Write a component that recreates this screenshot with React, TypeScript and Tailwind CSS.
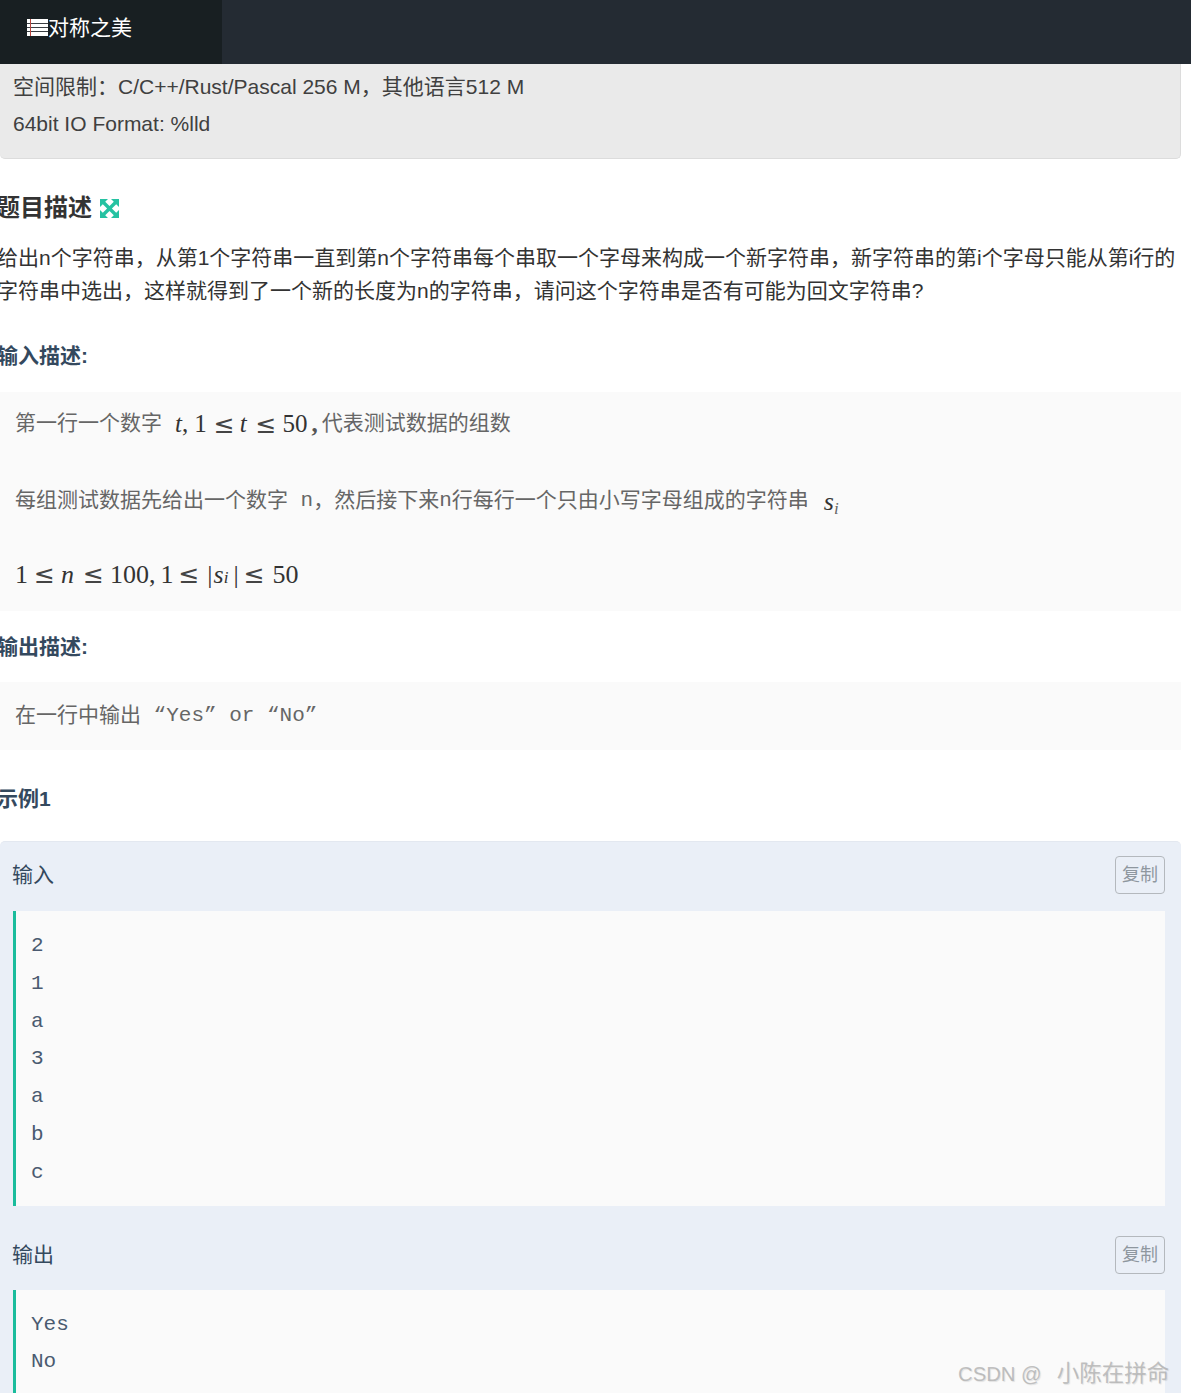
const sans = "font-['Arial','Liberation_Sans','Noto_Sans_CJK_SC',sans-serif]";
const pre = "font-['Liberation_Serif','Noto_Sans_CJK_SC',serif]";

function CopyBtn() {
  return (
    <button className="h-[38px] w-[50px] rounded-[4px] border border-[#b4b8bd] text-[18px] leading-[34px] text-[#8f979f]">
      复制
    </button>
  );
}

function Code({ lines, end }: { lines: string[]; end?: boolean }) {
  return (
    <div className={"ml-[13px] mr-[16px] border-l-[3px] border-[#1abc9c] bg-[#fafafa] pl-[15px] pt-[16px] font-['Liberation_Mono',monospace] text-[21px] leading-[37.8px] text-[#4a5a70] " + (end ? "pb-[40px]" : "pb-[14px]")}>
      {lines.map((l, i) => (
        <div key={i}>{l}</div>
      ))}
    </div>
  );
}

function Section({ children, className }: { children: React.ReactNode; className: string }) {
  return <div className={"-ml-[3px] text-[21px] font-bold leading-[30px] text-[#34495e] " + className}>{children}</div>;
}

function T({ children, className = "" }: { children: React.ReactNode; className?: string }) {
  return <span className={"font-['Liberation_Serif',serif] text-[#333] " + className}>{children}</span>;
}

function Le({ className = "" }: { className?: string }) {
  return <span className={"font-['DejaVu_Sans',sans-serif] text-[25px] leading-none text-[#444] " + className}>≤</span>;
}

export default function App() {
  return (
    <div className={"relative h-[1393px] w-[1191px] overflow-hidden bg-white " + sans}>
      <header className="flex h-[64px] bg-[#242b33]">
        <div className="flex w-[222px] items-center bg-[#181f22] pb-[10px] pl-[27px] text-[21px] text-white">
          <svg width="21" height="17" viewBox="0 0 21 17" className="shrink-0">
            <rect width="21" height="17" fill="#fff" />
            <rect y="4" width="21" height="1" fill="#3a3f44" />
            <rect y="8" width="21" height="1" fill="#3a3f44" />
            <rect y="12" width="21" height="1" fill="#3a3f44" />
            <rect x="3" width="1" height="17" fill="#b8453f" />
          </svg>
          <span className="leading-none">对称之美</span>
        </div>
      </header>

      <div className="mr-[10px] h-[95px] rounded-b-[5px] border-b border-r border-[#dcdcdc] bg-[#eaeaea] pl-[13px] text-[21px] leading-[37px] text-[#404040]">
        <div className="pt-[4px]">空间限制：C/C++/Rust/Pascal 256 M，其他语言512 M</div>
        <div>64bit IO Format: %lld</div>
      </div>

      <h2 className="-ml-[4px] mt-[33px] flex h-[32px] items-center gap-[8px] text-[24px] font-bold text-[#333]">
        题目描述
        <svg width="19" height="19" viewBox="0 0 19 19" fill="#26c2a2">
          <path d="M0 0h8L5.200 2.800 9.500 7.100 13.800 2.800 11 0h8v8l-2.800-2.800L11.900 9.500l4.300 4.300L19 11v8h-8l2.800-2.800-4.300-4.300-4.300 4.300L8 19H0v-8l2.800 2.800 4.300-4.300-4.300-4.300L0 8z" />
        </svg>
      </h2>

      <p className="-ml-[3px] mt-[16px] pt-[1px] text-[21px] leading-[33px] text-[#333]">
        <span className="block whitespace-nowrap">给出n个字符串，从第1个字符串一直到第n个字符串每个串取一个字母来构成一个新字符串，新字符串的第i个字母只能从第i行的</span>
        <span className="block whitespace-nowrap">字符串中选出，这样就得到了一个新的长度为n的字符串，请问这个字符串是否有可能为回文字符串?</span>
      </p>

      <Section className="mt-[34px]">输入描述:</Section>

      <div className={"mr-[10px] mt-[21px] h-[219px] bg-[#fafafa] pl-[15px] text-[21px] text-[#666] " + pre}>
        <div className="flex h-[62px] items-center whitespace-pre pt-[2px]">
          第一行一个数字
          <span className="ml-[13px] flex items-center text-[25px]">
            <T className="italic">t</T>
            <T>,</T>
            <T className="ml-[6px]">1</T>
            <Le className="ml-[7px]" />
            <T className="ml-[5px] italic">t</T>
            <Le className="ml-[9px]" />
            <T className="ml-[6px]">50</T>
            <span className="ml-[4px] font-bold text-[#555]">,</span>
          </span>
          <span className="ml-[4px]">代表测试数据的组数</span>
        </div>
        <div className="flex h-[76px] items-center whitespace-pre pt-[18px]">
          每组测试数据先给出一个数字<span className="font-['Liberation_Mono',monospace]"> n</span>，然后接下来<span className="font-['Liberation_Mono',monospace]">n</span>行每行一个只由小写字母组成的字符串
          <span className="ml-[15px] text-[26px]">
            <T className="italic">s</T>
            <sub className="text-[17px] italic">i</sub>
          </span>
        </div>
        <div className="flex h-[74px] items-center whitespace-pre pt-[14px] text-[26px]">
          <T>1</T>
          <Le className="ml-[6px]" />
          <T className="ml-[6px] italic">n</T>
          <Le className="ml-[9px]" />
          <T className="ml-[6px]">100,</T>
          <T className="ml-[5px]">1</T>
          <Le className="ml-[5px]" />
          <T className="ml-[8px]">|</T>
          <T className="ml-[1px] italic">s</T>
          <sub className="text-[17px] italic text-[#333]">i</sub>
          <T className="ml-[5px]">|</T>
          <Le className="ml-[5px]" />
          <T className="ml-[8px]">50</T>
        </div>
      </div>

      <Section className="mt-[21px]">输出描述:</Section>

      <div className={"mr-[10px] mt-[20px] flex h-[68px] items-center whitespace-pre bg-[#fafafa] pl-[15px] text-[21px] text-[#666] " + pre}>
        在一行中输出<span className="font-['Liberation_Mono',monospace]"> “Yes” or “No”</span>
      </div>

      <Section className="mt-[34px]">示例1</Section>

      <div className="mr-[10px] mt-[27px] rounded-t-[5px] border-t border-[#e3e8f0] bg-[#eaeff7] text-[#34495e]">
        <div className="flex h-[69px] items-center justify-between pb-[4px] pl-[12px] pr-[16px] text-[21px]">
          <span>输入</span>
          <CopyBtn />
        </div>
        <Code lines={["2", "1", "a", "3", "a", "b", "c"]} />
        <div className="flex h-[84px] items-center justify-between pl-[12px] pr-[16px] pt-[14px] text-[21px]">
          <span>输出</span>
          <CopyBtn />
        </div>
        <Code lines={["Yes", "No"]} end />
      </div>

      <div className="absolute left-[958px] top-[1359px] flex items-center whitespace-pre leading-[30px] text-[#a8a8a8]/70 [text-shadow:1px_1px_1px_rgba(0,0,0,0.1)]">
        <span className="text-[20.300px]">CSDN @</span>
        <span className="ml-[15px] text-[22.500px]">小陈在拼命</span>
      </div>
    </div>
  );
}
